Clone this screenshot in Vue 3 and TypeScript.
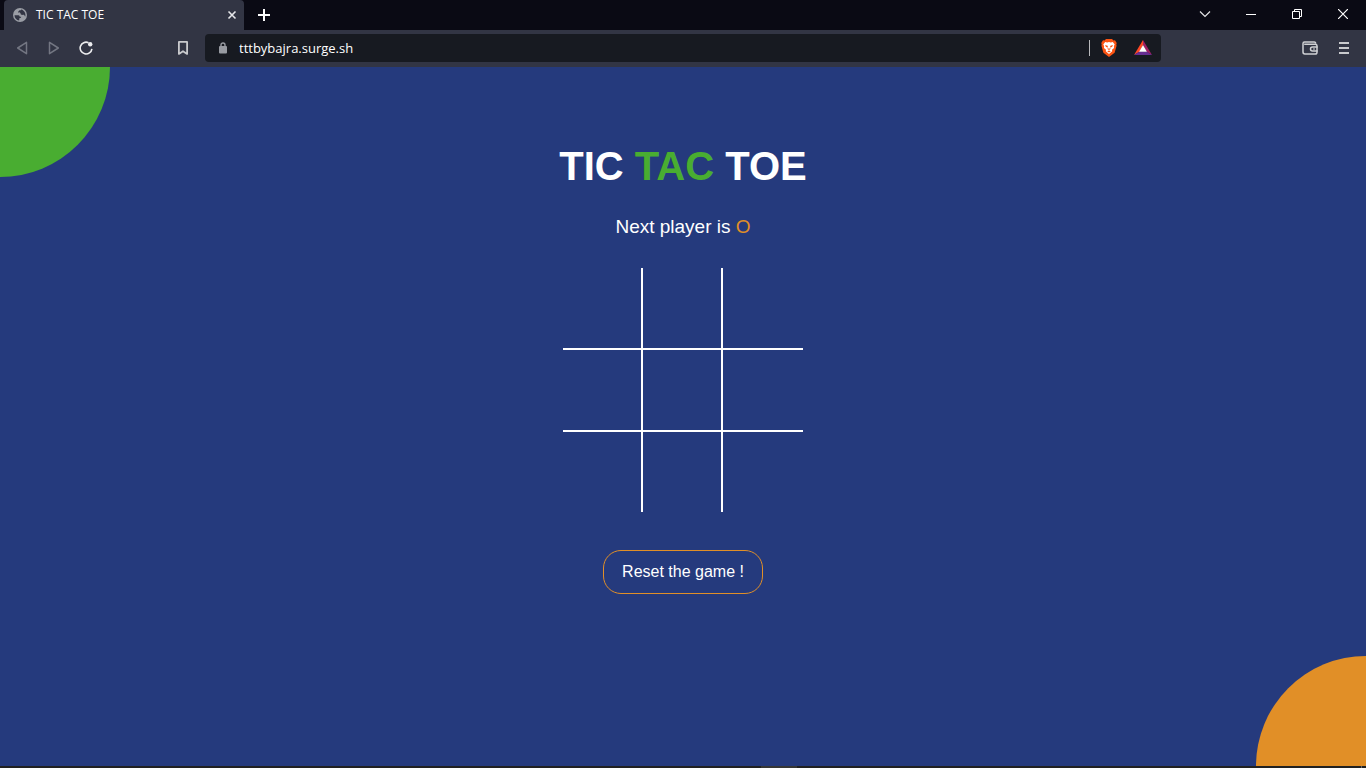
<script setup lang="ts">
import { computed, ref } from 'vue'

type Player = 'X' | 'O'

const address = ref('tttbybajra.surge.sh')
const next = ref<Player>('O')
const cells = ref<(Player | '')[]>(Array(9).fill(''))

const lines = [
  [0, 1, 2], [3, 4, 5], [6, 7, 8],
  [0, 3, 6], [1, 4, 7], [2, 5, 8],
  [0, 4, 8], [2, 4, 6],
]

const finished = computed(() =>
  lines.some(([a, b, c]) => cells.value[a] !== '' && cells.value[a] === cells.value[b] && cells.value[a] === cells.value[c]),
)

function play(index: number) {
  if (cells.value[index] || finished.value) return
  cells.value[index] = next.value
  next.value = next.value === 'O' ? 'X' : 'O'
}

function reset() {
  cells.value = Array(9).fill('')
  next.value = 'O'
}
</script>

<template>
  <div class="window">
    <header class="tabstrip">
      <div class="tab">
        <svg class="globe" width="14" height="14" viewBox="0 0 14 14" aria-hidden="true">
          <circle cx="7" cy="7" r="7" fill="#9a9da5" />
          <path d="M1.500 7.300h3.300c1 0 1.800.5 2 1.400h1.300c.2 1-.8 1.300-1.600 1.400l-.4 2.400C3.500 12.200 1.500 10 1.500 7.300z" fill="#323544" />
          <path d="M8.200 1.600c-.1.800-1.200.8-2 .9-.4.800-1.200 1-1.200 1.800.7.500 1.700.1 2.300.6.500.6.200 1.600 1.200 1.900 1.200.3 2-.4 2.700.3.400.5.500 1.200 1.100 1.400.7-3.200-1.200-6.200-4.100-6.900z" fill="#323544" />
        </svg>
        <span class="tab-title">TIC TAC TOE</span>
        <button class="tab-close" type="button" aria-label="Close tab">
          <svg width="10" height="10" viewBox="0 0 10 10"><path d="M1.500 1.500l7 7M8.500 1.500l-7 7" stroke="#e6e7ea" stroke-width="1.600" /></svg>
        </button>
      </div>
      <button class="new-tab" type="button" aria-label="New tab">
        <svg width="12" height="12" viewBox="0 0 12 12"><path d="M6 0v12M0 6h12" stroke="#fff" stroke-width="2" /></svg>
      </button>
      <div class="controls">
        <button type="button" aria-label="Search tabs">
          <svg width="12" height="12" viewBox="0 0 12 12"><path d="M1 3.500l5 5 5-5" fill="none" stroke="#e4e4e6" stroke-width="1.200" /></svg>
        </button>
        <button type="button" aria-label="Minimize">
          <svg width="10" height="10" viewBox="0 0 10 10"><path d="M0 5.500h10" stroke="#fff" /></svg>
        </button>
        <button type="button" aria-label="Restore">
          <svg width="10" height="10" viewBox="0 0 10 10"><path d="M.5 2.500h7v7h-7zM2.500 2.500v-2h7v7h-2" fill="none" stroke="#fff" /></svg>
        </button>
        <button type="button" aria-label="Close">
          <svg width="10" height="10" viewBox="0 0 10 10"><path d="M0 0l10 10M10 0L0 10" stroke="#fff" stroke-width="1.200" /></svg>
        </button>
      </div>
    </header>

    <nav class="toolbar" aria-label="Navigation">
      <button type="button" aria-label="Back">
        <svg width="14" height="16" viewBox="0 0 14 16"><path d="M11.500 2.300v11.400L2.700 8z" fill="none" stroke="#737682" stroke-width="1.500" stroke-linejoin="round" /></svg>
      </button>
      <button type="button" aria-label="Forward">
        <svg width="14" height="16" viewBox="0 0 14 16"><path d="M2.500 2.300v11.400L11.300 8z" fill="none" stroke="#737682" stroke-width="1.500" stroke-linejoin="round" /></svg>
      </button>
      <button type="button" aria-label="Reload">
        <svg width="14" height="14" viewBox="0 0 14 14">
          <path d="M9.500 1.700A5.900 5.900 0 1 0 12.900 7.800" fill="none" stroke="#ecedef" stroke-width="1.600" />
          <circle cx="11.200" cy="3.200" r="2.200" fill="#ecedef" />
        </svg>
      </button>
      <button class="bookmark" type="button" aria-label="Bookmark">
        <svg width="12" height="16" viewBox="0 0 12 16"><path d="M1.900 1.900h8.200v12L6 11.200l-4.100 2.700z" fill="none" stroke="#c9cacd" stroke-width="1.800" stroke-linejoin="round" /></svg>
      </button>
      <div class="omnibox">
        <svg class="lock" width="8" height="12" viewBox="0 0 8 12" aria-hidden="true">
          <path d="M2 5V3a2 2 0 0 1 4 0v2" fill="none" stroke="#989ba2" stroke-width="1.400" />
          <rect y="4" width="8" height="7.500" rx="1" fill="#989ba2" />
        </svg>
        <input v-model="address" type="text" aria-label="Address" spellcheck="false">
        <span class="divider"></span>
        <button type="button" aria-label="Brave Shields">
          <svg width="16" height="18" viewBox="0 0 16 18">
            <path d="M5 0h6l1.500 1.500 1.500-.2L15.700 4l-.4 1.500.3 1.300-2 7L8 18l-5.600-4.200-2-7 .3-1.300L.3 4 2 1.300l1.500.2z" fill="#fb5413" />
            <path d="M4.200 3l2 .4L8 2.900l1.800.5 2-.4 1.900 2.500-.8 1.500.1 2-2 1.800.2 1.500L8 15l-3.200-2.700.2-1.500-2-1.800.1-2-.8-1.500z" fill="#fff" />
            <path d="M4 6l2.600.7.600 2.600L8 10l.8-.7.600-2.600L12 6l-1 2-2 .4L9.500 10 8 11l-1.500-1L7 8.400 5 8zM6.200 12.200L8 11.500l1.800.7L8 13.500z" fill="#fb5413" />
          </svg>
        </button>
        <button type="button" aria-label="Brave Rewards">
          <svg width="18" height="15" viewBox="0 0 18 15">
            <path d="M9 0L0 15l5.500-3.200L9 5z" fill="#ff4724" />
            <path d="M9 0l9 15-5.500-3.200L9 5z" fill="#9e1f63" />
            <path d="M0 15h18l-5.500-3.500h-7z" fill="#662d91" />
            <path d="M9 5l3.900 6.800H5.100z" fill="#fff" />
          </svg>
        </button>
      </div>
      <div class="actions">
        <button type="button" aria-label="Wallet">
          <svg width="16" height="14" viewBox="0 0 16 14" fill="none" stroke="#d0d1d4" stroke-width="1.500">
            <path d="M1 2.500C1 1.500 1.600 1 2.500 1h9.800c.8 0 1.300.5 1.500 1.500M1 2.500v8.600c0 1 .8 1.900 1.800 1.900h10.400c1 0 1.800-.8 1.800-1.800V4.800c0-1-.8-1.600-1.800-1.600H2.200" />
            <path d="M15.500 6h-5a2 2 0 0 0 0 4h5" />
            <path d="M11 8h2" stroke-width="1" />
          </svg>
        </button>
        <button type="button" aria-label="Menu">
          <svg width="10" height="12" viewBox="0 0 10 12"><path d="M0 1h10M0 6h10M0 11h10" stroke="#c9cacd" stroke-width="2" /></svg>
        </button>
      </div>
    </nav>

    <main class="page">
      <span class="corner green"></span>
      <span class="corner orange"></span>
      <h1>TIC <span class="tac">TAC</span> TOE</h1>
      <p class="status">Next player is <span class="player">{{ next }}</span></p>
      <div class="board">
        <button
          v-for="(mark, index) in cells"
          :key="index"
          class="cell"
          type="button"
          :aria-label="`Cell ${index + 1}`"
          @click="play(index)"
        >{{ mark }}</button>
      </div>
      <button class="reset" type="button" @click="reset">Reset the game !</button>
    </main>

    <footer class="taskbar"><span class="running"></span><span class="peek"></span></footer>
  </div>
</template>

<style>
body {
  margin: 0;
  background: #253a7d;
}
</style>

<style scoped>
.window {
  display: flex;
  flex-direction: column;
  min-height: 100vh;
  font-family: "Liberation Sans", Arial, sans-serif;
}

button {
  display: flex;
  align-items: center;
  justify-content: center;
  padding: 0;
  border: 0;
  background: none;
  color: inherit;
  font-family: inherit;
  cursor: pointer;
}

.tabstrip {
  display: flex;
  height: 30px;
  padding-left: 4px;
  background: #0a0a14;
}

.tab {
  display: flex;
  align-items: center;
  box-sizing: border-box;
  width: 240px;
  padding: 0 4px 0 9px;
  border-radius: 4px 4px 0 0;
  background: #323544;
  color: #fff;
}

.tab-title {
  flex: 1;
  margin-left: 9px;
  font: 500 12px/16px "Open Sans", "Noto Sans", sans-serif;
}

.tab-close {
  width: 16px;
  height: 16px;
}

.new-tab {
  width: 40px;
}

.controls {
  display: flex;
  margin-left: auto;
}

.controls button {
  width: 46px;
  height: 28px;
}

.toolbar {
  display: flex;
  align-items: center;
  box-sizing: border-box;
  height: 37px;
  padding: 0 0 2px 6px;
  background: #323544;
}

.toolbar button {
  width: 32px;
  height: 28px;
}

.toolbar .bookmark {
  margin-left: 65px;
}

.omnibox {
  display: flex;
  flex: 1;
  align-items: center;
  height: 28px;
  margin-left: 6px;
  padding: 0 1px 0 14px;
  border-radius: 4px;
  background: #171a21;
}

.omnibox input {
  flex: 1;
  min-width: 0;
  margin-left: 12px;
  padding: 0;
  border: 0;
  outline: 0;
  background: none;
  color: #fff;
  font: 13px/20px "Open Sans", "Noto Sans", sans-serif;
}

.divider {
  width: 1px;
  height: 16px;
  margin-right: 2px;
  background: #b9babd;
}

.omnibox button {
  width: 34px;
}

.actions {
  display: flex;
  justify-content: flex-end;
  box-sizing: border-box;
  width: 205px;
  padding-right: 5px;
}

.actions button {
  width: 34px;
}

.page {
  position: relative;
  display: flex;
  flex: 1;
  flex-direction: column;
  align-items: center;
  overflow: hidden;
  background: #253a7d;
  color: #fff;
}

.corner {
  position: absolute;
  width: 110px;
  height: 110px;
}

.green {
  top: 0;
  left: 0;
  border-radius: 0 0 110px 0;
  background: #49ad31;
}

.orange {
  right: 0;
  bottom: 0;
  border-radius: 110px 0 0 0;
  background: #e18f27;
}

h1 {
  margin: 76px 0 0;
  font-size: 40px;
  line-height: 46px;
}

.tac {
  color: #49ad31;
}

.status {
  margin: 26px 0 0;
  font-size: 19px;
  line-height: 24px;
}

.player {
  color: #e18f27;
}

.board {
  display: grid;
  grid-template-columns: repeat(3, 80px);
  grid-template-rows: 82px 82px 80px;
  margin-top: 29px;
}

.cell {
  border: 0 solid #fff;
  font-size: 40px;
}

.cell:not(:nth-child(3n)) {
  border-right-width: 2px;
}

.cell:nth-child(-n + 6) {
  border-bottom-width: 2px;
}

.reset {
  height: 44px;
  margin-top: 38px;
  padding: 0 18px;
  border: 1px solid #e18f27;
  border-radius: 18px;
  font-size: 16px;
}

.taskbar {
  display: flex;
  align-items: stretch;
  height: 2px;
  background: #212121;
}

.running {
  width: 36px;
  margin-left: calc(50% + 78px);
  background: #363636;
}

.peek {
  width: 1px;
  margin-left: auto;
  margin-right: 4px;
  background: #6a6a6a;
}
</style>
